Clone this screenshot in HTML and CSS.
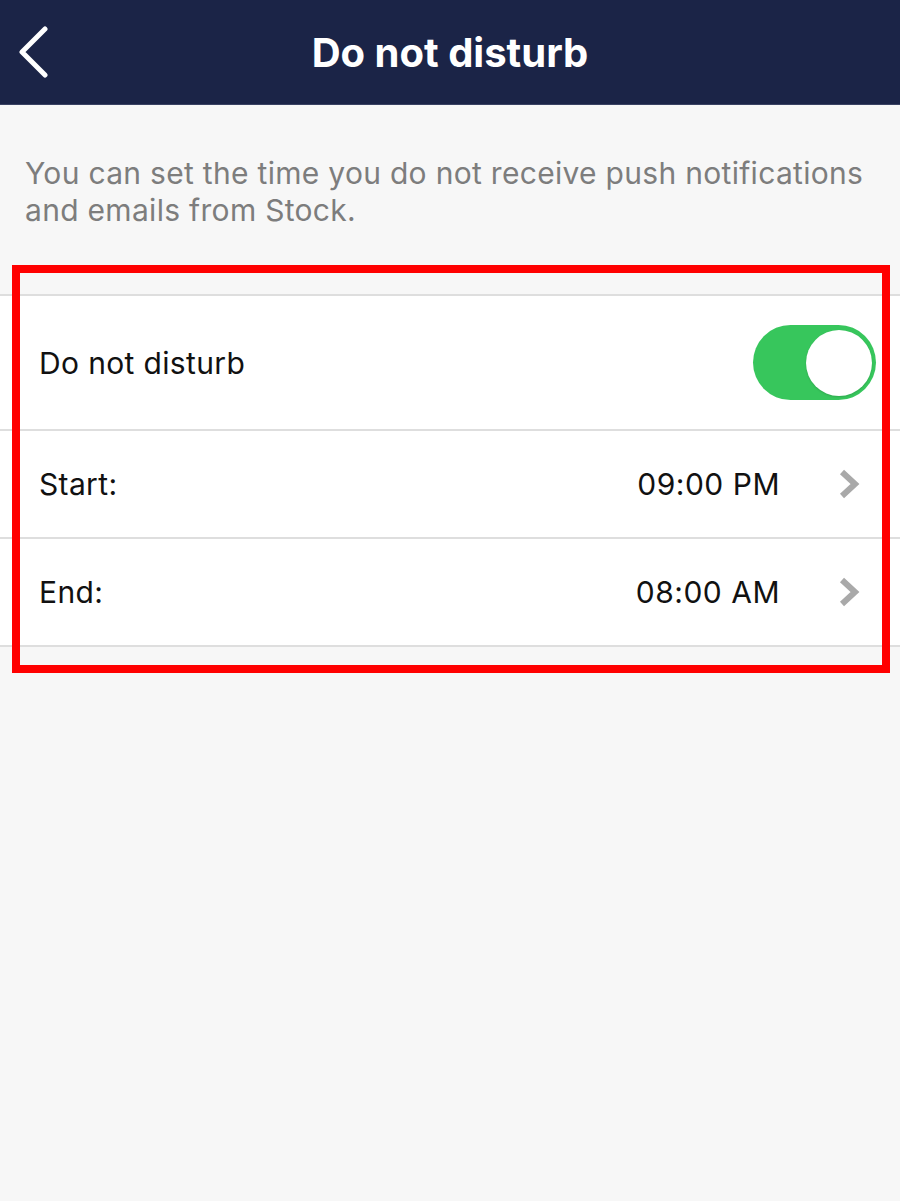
FILE: index.html
```html
<!DOCTYPE html>
<html lang="en">
<head>
    <meta charset="UTF-8">
    <title>Do not disturb</title>
    <link rel="stylesheet" href="styles.css">
</head>
<body>

<div class="header">
    <div class="back">
        <svg width="34" height="52" viewBox="0 0 34 52">
            <polyline points="29,3 6,26 29,49" fill="none" stroke="#fff" stroke-width="5" stroke-linecap="round" stroke-linejoin="round"/>
        </svg>
    </div>
    <div class="title">Do not disturb</div>
    <div></div>
</div>

<p class="hint">You can set the time you do not receive push notifications and emails from Stock.</p>

<div class="settings">
    <div class="highlight"></div>

    <div class="row row-toggle">
        <span class="label">Do not disturb</span>
        <div class="switch on"><div class="knob"></div></div>
    </div>

    <div class="row">
        <span class="label">Start:</span>
        <span class="value">09:00 PM</span>
        <svg class="chevron" width="22" height="30" viewBox="0 0 22 30">
            <polyline points="4,3 17,15 4,27" fill="none" stroke="#a9a9a9" stroke-width="6"/>
        </svg>
    </div>

    <div class="row">
        <span class="label">End:</span>
        <span class="value">08:00 AM</span>
        <svg class="chevron" width="22" height="30" viewBox="0 0 22 30">
            <polyline points="4,3 17,15 4,27" fill="none" stroke="#a9a9a9" stroke-width="6"/>
        </svg>
    </div>
</div>

</body>
</html>
```

FILE: styles.css
```css
html, body {
    margin: 0;
    min-height: 100%;
}

body {
    min-height: 100vh;
    background: #f7f7f7;
    font-family: "Inter", "Liberation Sans", sans-serif;
    color: #111;
}

.header {
    display: grid;
    grid-template-columns: 1fr auto 1fr;
    align-items: center;
    height: 104px;
    background: #1b2447;
    border-bottom: 1px solid #3a4263;
}

.back {
    padding-left: 16px;
    display: flex;
    align-items: center;
}

.title {
    color: #fff;
    font-size: 40px;
    font-weight: 700;
}

.hint {
    margin: 0;
    padding: 50px 0 0 25px;
    font-size: 30px;
    line-height: 37px;
    letter-spacing: 0.3px;
    color: #7d7d7d;
}

.settings {
    position: relative;
    margin-top: 65px;
    background: #fff;
    border-top: 2px solid #dedede;
}

/* roter Rahmen über der Liste */
.highlight {
    position: absolute;
    left: 12px;
    top: -31px;
    width: 862px;
    height: 392px;
    border: 8px solid #ff0000;
    pointer-events: none;
    z-index: 2;
}

.row {
    display: flex;
    align-items: center;
    height: 106px;
    padding: 0 40px 0 39px;
    border-bottom: 2px solid #dedede;
}

.row-toggle {
    height: 133px;
    padding-right: 24px;
}

.label {
    flex: 1;
    font-size: 30px;
    letter-spacing: 0.35px;
}

.value {
    font-size: 30px;
    letter-spacing: 0.5px;
    margin-right: 58px;
}

.switch {
    width: 123px;
    height: 75px;
    border-radius: 38px;
    background: #37c65c;
    display: flex;
    align-items: center;
    justify-content: flex-end;
    padding-right: 4px;
    box-sizing: border-box;
}

.knob {
    width: 66px;
    height: 66px;
    border-radius: 50%;
    background: #fff;
    box-shadow: 0 1px 2px rgba(0, 0, 0, 0.15);
}
```
